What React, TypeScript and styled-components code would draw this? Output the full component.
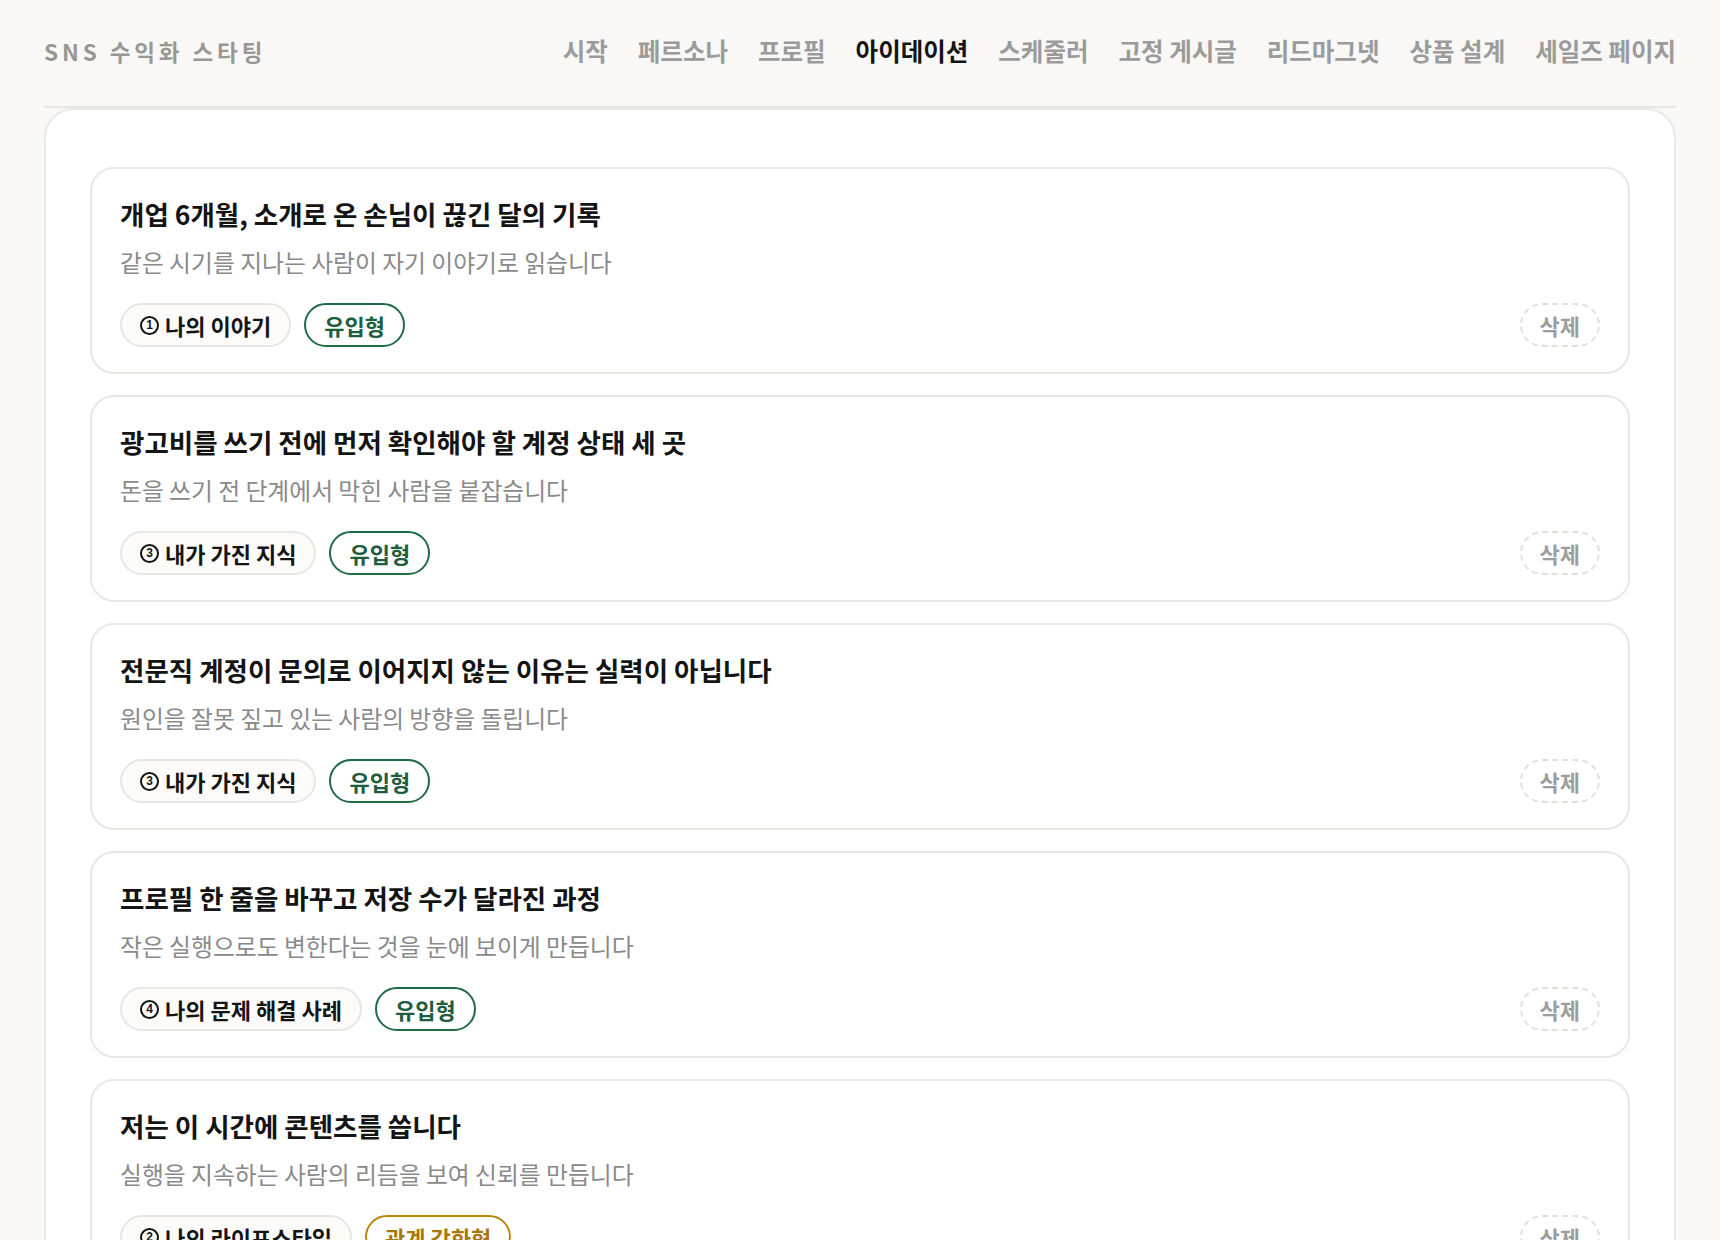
import React from 'react';
import styled, { createGlobalStyle } from 'styled-components';

type Kind = 'inflow' | 'relation';

interface IIdea {
  title: string;
  description: string;
  sourceNo: number;
  source: string;
  kind: Kind;
}

const ideas: IIdea[] = [
  {
    title: '개업 6개월, 소개로 온 손님이 끊긴 달의 기록',
    description: '같은 시기를 지나는 사람이 자기 이야기로 읽습니다',
    sourceNo: 1,
    source: '나의 이야기',
    kind: 'inflow',
  },
  {
    title: '광고비를 쓰기 전에 먼저 확인해야 할 계정 상태 세 곳',
    description: '돈을 쓰기 전 단계에서 막힌 사람을 붙잡습니다',
    sourceNo: 3,
    source: '내가 가진 지식',
    kind: 'inflow',
  },
  {
    title: '전문직 계정이 문의로 이어지지 않는 이유는 실력이 아닙니다',
    description: '원인을 잘못 짚고 있는 사람의 방향을 돌립니다',
    sourceNo: 3,
    source: '내가 가진 지식',
    kind: 'inflow',
  },
  {
    title: '프로필 한 줄을 바꾸고 저장 수가 달라진 과정',
    description: '작은 실행으로도 변한다는 것을 눈에 보이게 만듭니다',
    sourceNo: 4,
    source: '나의 문제 해결 사례',
    kind: 'inflow',
  },
  {
    title: '저는 이 시간에 콘텐츠를 씁니다',
    description: '실행을 지속하는 사람의 리듬을 보여 신뢰를 만듭니다',
    sourceNo: 2,
    source: '나의 라이프스타일',
    kind: 'relation',
  },
  {
    title: '첫 상담에서 꼭 묻는 질문 다섯 가지',
    description: '아직 망설이는 사람에게 다음 단계를 보여줍니다',
    sourceNo: 3,
    source: '내가 가진 지식',
    kind: 'relation',
  },
];

const kindLabel: Record<Kind, string> = {
  inflow: '유입형',
  relation: '관계 강화형',
};

const navItems = ['시작', '페르소나', '프로필', '아이데이션', '스케줄러', '고정 게시글', '리드마그넷', '상품 설계', '세일즈 페이지'];

const GlobalStyle = createGlobalStyle`
  * {
    box-sizing: border-box;
  }
  body {
    margin: 0;
    background: #f9f8f6;
    font-family: 'Noto Sans CJK KR', 'Noto Sans', sans-serif;
    color: #141414;
  }
`;

const App = () => {
  return (
    <>
      <GlobalStyle />
      <Page>
        <Header>
          <Logo>SNS 수익화 스타팅</Logo>
          <Nav>
            {navItems.map((item) => (
              <NavLink key={item} $active={item === '아이데이션'}>
                {item}
              </NavLink>
            ))}
          </Nav>
        </Header>
        <Panel>
          <IdeaList>
            {ideas.map((idea) => (
              <IdeaCard key={idea.title}>
                <Title>{idea.title}</Title>
                <Description>{idea.description}</Description>
                <Footer>
                  <Chips>
                    <SourceChip>
                      <SourceNo>{idea.sourceNo}</SourceNo>
                      {idea.source}
                    </SourceChip>
                    <KindChip $kind={idea.kind}>{kindLabel[idea.kind]}</KindChip>
                  </Chips>
                  <DeleteButton type="button">삭제</DeleteButton>
                </Footer>
              </IdeaCard>
            ))}
          </IdeaList>
        </Panel>
      </Page>
    </>
  );
};

const Page = styled.div`
  padding: 0 44px;
`;

const Header = styled.header`
  display: flex;
  align-items: center;
  justify-content: space-between;
  padding: 35px 0 39px;
  border-bottom: 2px solid #e8e6e1;
`;

const Logo = styled.div`
  font-size: 22.5px;
  line-height: 32px;
  font-weight: 700;
  letter-spacing: 3.9px;
  color: #9a9793;
`;

const Nav = styled.nav`
  display: flex;
  gap: 30px;
`;

const NavLink = styled.a<{ $active?: boolean }>`
  font-size: 24.5px;
  line-height: 32px;
  font-weight: 700;
  color: ${({ $active }) => ($active ? '#141414' : '#9b9b9b')};
  cursor: pointer;
`;

const Panel = styled.main`
  background: #fff;
  border: 2px solid #ebe9e5;
  border-radius: 30px;
  padding: 57px 44px 44px;
`;

const IdeaList = styled.div`
  display: flex;
  flex-direction: column;
  gap: 21px;
`;

const IdeaCard = styled.div`
  border: 2px solid #e9e7e3;
  border-radius: 24px;
  padding: 28px 28px 25px;
  background: #fff;
`;

const Title = styled.h3`
  margin: 0;
  font-size: 26.5px;
  line-height: 34px;
  font-weight: 700;
  color: #141414;
`;

const Description = styled.p`
  margin: 14px 0 0;
  font-size: 23.8px;
  line-height: 33px;
  font-weight: 400;
  color: #8a8a8a;
`;

const Footer = styled.div`
  display: flex;
  align-items: center;
  justify-content: space-between;
  margin-top: 25px;
`;

const Chips = styled.div`
  display: flex;
  gap: 13px;
`;

const Chip = styled.span`
  display: inline-flex;
  align-items: center;
  padding: 6px 18px;
  border: 2px solid #e8e6e1;
  border-radius: 999px;
  font-size: 22px;
  line-height: 28px;
  font-weight: 700;
  white-space: nowrap;
`;

const SourceChip = styled(Chip)`
  background: #fcfbfa;
  color: #141414;
`;

const SourceNo = styled.span`
  display: inline-flex;
  align-items: center;
  justify-content: center;
  width: 19px;
  height: 19px;
  margin-right: 6px;
  border: 2.5px solid currentColor;
  border-radius: 50%;
  font-family: 'Liberation Sans', sans-serif;
  font-size: 12px;
  font-weight: 700;
  line-height: 1;
`;

const KindChip = styled(Chip)<{ $kind: Kind }>`
  background: #fff;
  border-color: ${({ $kind }) => ($kind === 'inflow' ? '#1f6b47' : '#b8860b')};
  color: ${({ $kind }) => ($kind === 'inflow' ? '#1c5e3d' : '#a8780a')};
`;

const DeleteButton = styled.button`
  padding: 6px 18px;
  border: 2px dashed #e2e0dc;
  border-radius: 999px;
  background: transparent;
  font-family: inherit;
  font-size: 22px;
  line-height: 28px;
  font-weight: 700;
  color: #9d9d9d;
  cursor: pointer;
`;

export default App;
